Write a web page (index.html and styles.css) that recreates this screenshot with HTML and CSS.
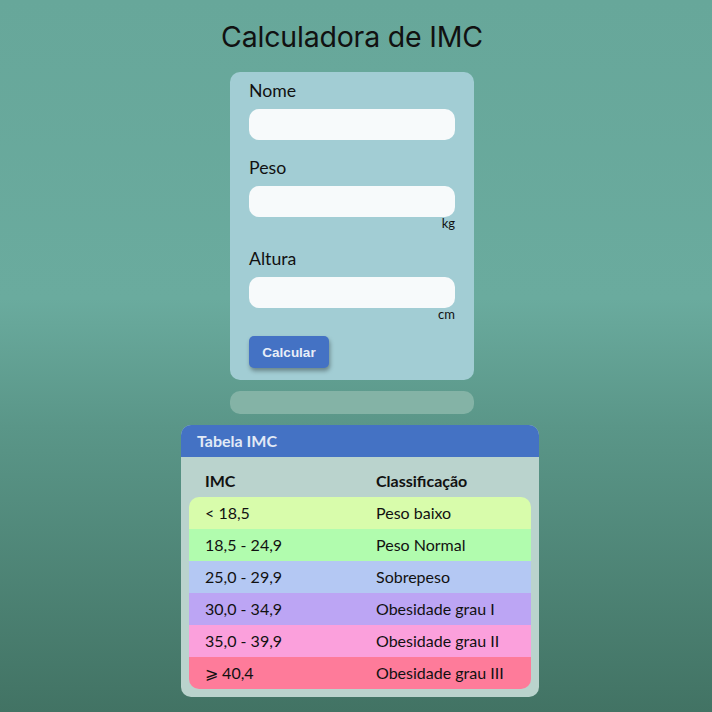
FILE: index.html
```html
<!DOCTYPE html>
<html lang="pt">
<head>
<meta charset="utf-8">
<title>Calculadora de IMC</title>
<link rel="stylesheet" href="styles.css">
</head>
<body>
<main class="page">
  <h1 class="title">Calculadora de IMC</h1>
  <form class="card">
    <label class="label" for="nome">Nome</label>
    <input class="input first" id="nome" type="text">
    <label class="label" for="peso">Peso</label>
    <input class="input" id="peso" type="text">
    <span class="unit">kg</span>
    <label class="label" for="altura">Altura</label>
    <input class="input" id="altura" type="text">
    <span class="unit last">cm</span>
    <button class="btn" type="button">Calcular</button>
  </form>
  <div class="result"></div>
  <section class="table-card">
    <div class="table-head">Tabela IMC</div>
    <div class="table-body">
      <div class="row header"><span>IMC</span><span>Classificação</span></div>
      <div class="row r1"><span>&lt; 18,5</span><span>Peso baixo</span></div>
      <div class="row r2"><span>18,5 - 24,9</span><span>Peso Normal</span></div>
      <div class="row r3"><span>25,0 - 29,9</span><span>Sobrepeso</span></div>
      <div class="row r4"><span>30,0 - 34,9</span><span>Obesidade grau I</span></div>
      <div class="row r5"><span>35,0 - 39,9</span><span>Obesidade grau II</span></div>
      <div class="row r6"><span>⩾ 40,4</span><span>Obesidade grau III</span></div>
    </div>
  </section>
</main>
</body>
</html>
```
FILE: styles.css
```css
html, body {
  margin: 0;
  padding: 0;
  height: 100%;
}
body {
  background: linear-gradient(to bottom, #67a79a 0%, #6aab9e 42%, #5a9688 60%, #427364 100%);
  font-family: "Lato", "Liberation Sans", sans-serif;
  color: #111;
}
.page {
  display: flex;
  flex-direction: column;
  align-items: center;
  padding-top: 19px;
}
.title {
  margin: 0 8px 0 0;
  font-family: "Inter", "Roboto", sans-serif;
  font-weight: 400;
  font-size: 28.5px;
  line-height: 36px;
  letter-spacing: -0.2px;
  color: #111;
}
.card {
  margin: 17px 8px 0 0;
  width: 244px;
  box-sizing: border-box;
  background: #a2cdd4;
  border-radius: 10px;
  padding: 9px 19px 12px 19px;
  display: flex;
  flex-direction: column;
}
.label {
  font-size: 17.7px;
  line-height: 20px;
  margin-bottom: 8px;
}
.input {
  height: 31px;
  box-sizing: border-box;
  border: none;
  border-radius: 10px;
  background: #f7fafb;
  outline: none;
}
.input.first { margin-bottom: 18px; }
.unit {
  align-self: flex-end;
  font-size: 13px;
  line-height: 14px;
  margin-top: -1px;
  margin-bottom: 19px;
}
.unit.last { margin-bottom: 15px; }
.btn {
  align-self: flex-start;
  width: 80px;
  height: 32px;
  border: none;
  border-radius: 5px;
  background: #4472c4;
  color: #e8eef8;
  font-family: "Liberation Sans", Arial, sans-serif;
  font-weight: 700;
  font-size: 13.5px;
  box-shadow: 1px 3px 4px rgba(0, 0, 0, 0.35);
}
.result {
  margin: 11px 8px 0 0;
  width: 244px;
  height: 23px;
  border-radius: 10px;
  background: #84b3a6;
}
.table-card {
  margin: 11px 0 15px 8px;
  width: 358px;
  background: #bad3cd;
  border-radius: 10px;
  overflow: hidden;
}
.table-head {
  background: #4472c4;
  color: #e2eaf6;
  font-weight: 700;
  font-size: 16px;
  height: 32px;
  line-height: 32px;
  padding-left: 16px;
}
.table-body {
  padding: 8px;
}
.row {
  display: grid;
  grid-template-columns: 171px 1fr;
  height: 32px;
  line-height: 32px;
  padding-left: 16px;
  font-size: 16px;
}
.row.header {
  font-weight: 700;
}
.r1 { background: #d8fcab; border-radius: 10px 10px 0 0; }
.r2 { background: #b1fcae; }
.r3 { background: #b4c8f3; }
.r4 { background: #bca5f4; }
.r5 { background: #fba0dc; }
.r6 { background: #fe7b9a; border-radius: 0 0 10px 10px; }
```
